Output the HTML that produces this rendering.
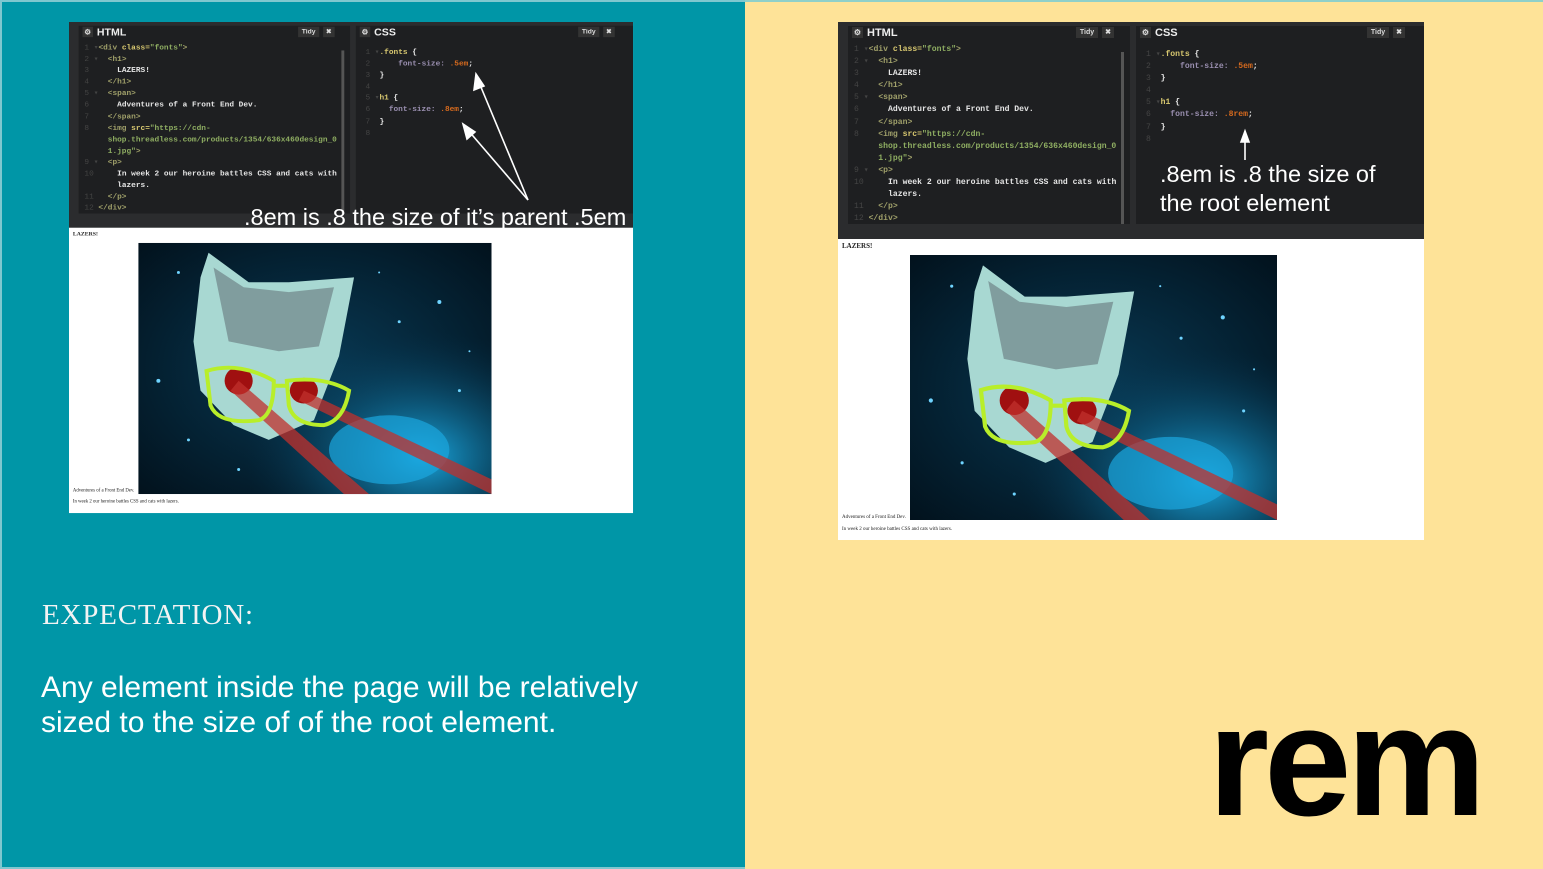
<!DOCTYPE html>
<html><head><meta charset="utf-8">
<style>
*{margin:0;padding:0;box-sizing:border-box}
body{width:1543px;height:869px;overflow:hidden;position:relative;font-family:"Liberation Sans",sans-serif}
#L{position:absolute;left:0;top:0;width:745px;height:869px;background:#0096a7;border:2px solid #7fc7cf;border-right:none}
#R{position:absolute;left:745px;top:0;width:798px;height:869px;background:#fee398;border-top:2px solid #8fd0c9}
.shot{position:absolute;width:586px;height:518px;transform-origin:0 0;background:#fff;overflow:hidden}
.dark{position:absolute;left:0;top:0;width:586px;height:217px;background:#2b2c2e}
.pane{position:absolute;top:4px;height:198px;background:#1e1f21}
.hd{position:absolute;top:5px;left:6px;color:#eee;font-weight:bold;font-size:11px}
.gear{display:inline-block;width:11px;height:11px;background:#333;color:#ddd;font-size:8px;text-align:center;line-height:11px;margin-right:4px;vertical-align:1px}
.btn{position:absolute;top:5px;height:11px;background:#333;color:#ddd;font-size:7px;line-height:11px;text-align:center;font-weight:bold}
.code{position:absolute;font-family:"Liberation Mono",monospace;font-size:8.1px;line-height:12.1px;white-space:pre;color:#ddd;font-weight:bold}
.ln{color:#444;font-weight:normal}
.t{color:#a0a06a}.a{color:#d8c870}.s{color:#8fae62}.w{color:#e6e6e6}
.p{color:#9a8fb0}.v{color:#d66a1e}
.prev{position:absolute;font-family:"Liberation Serif",serif;color:#222}
.img{position:absolute;left:72px;top:233px;width:367px;height:265px}
.ann{position:absolute;color:#fff;font-size:23.5px;white-space:nowrap}
</style></head><body>
<div id="L"></div><div id="R"></div>

<div class="shot" style="left:69px;top:22px;transform:scale(0.9625,0.948)">
 <div class="dark"></div>
 <div class="pane" style="left:10px;width:282px"></div>
 <div class="pane" style="left:298px;width:288px"></div>
 <div class="hd" style="left:14px"><span class="gear">⚙</span>HTML</div>
 <div class="btn" style="left:238px;width:22px">Tidy</div><div class="btn" style="left:264px;width:12px">✖</div>
 <div class="hd" style="left:302px"><span class="gear">⚙</span>CSS</div>
 <div class="btn" style="left:529px;width:22px">Tidy</div><div class="btn" style="left:555px;width:12px">✖</div>
 <div style="position:absolute;left:283px;top:30px;width:3px;height:172px;background:#555"></div>
 <div class="code" style="left:16px;top:22px"><span class="ln">1 ▾</span><span class="t">&lt;div </span><span class="a">class=</span><span class="s">"fonts"</span><span class="t">&gt;</span>
<span class="ln">2 ▾</span>  <span class="t">&lt;h1&gt;</span>
<span class="ln">3  </span>    <span class="w">LAZERS!</span>
<span class="ln">4  </span>  <span class="t">&lt;/h1&gt;</span>
<span class="ln">5 ▾</span>  <span class="t">&lt;span&gt;</span>
<span class="ln">6  </span>    <span class="w">Adventures of a Front End Dev.</span>
<span class="ln">7  </span>  <span class="t">&lt;/span&gt;</span>
<span class="ln">8  </span>  <span class="t">&lt;img </span><span class="a">src=</span><span class="s">"https://cdn-</span>
<span class="ln">   </span>  <span class="s">shop.threadless.com/products/1354/636x460design_0</span>
<span class="ln">   </span>  <span class="s">1.jpg"</span><span class="t">&gt;</span>
<span class="ln">9 ▾</span>  <span class="t">&lt;p&gt;</span>
<span class="ln">10 </span>    <span class="w">In week 2 our heroine battles CSS and cats with</span>
<span class="ln">   </span>    <span class="w">lazers.</span>
<span class="ln">11 </span>  <span class="t">&lt;/p&gt;</span>
<span class="ln">12 </span><span class="t">&lt;/div&gt;</span></div>
 <div class="code" style="left:308px;top:27px"><span class="ln">1 ▾</span><span class="a">.fonts </span><span class="w">{</span>
<span class="ln">2  </span>    <span class="p">font-size: </span><span class="v">.5em</span><span class="w">;</span>
<span class="ln">3  </span><span class="w">}</span>
<span class="ln">4  </span>
<span class="ln">5 ▾</span><span class="a">h1 </span><span class="w">{</span>
<span class="ln">6  </span>  <span class="p">font-size: </span><span class="v">.8em</span><span class="w">;</span>
<span class="ln">7  </span><span class="w">}</span>
<span class="ln">8  </span></div>
 <div class="prev" style="left:4px;top:221px;font-size:6px;font-weight:bold">LAZERS!</div>
 <svg class="img" viewBox="0 0 352 255" preserveAspectRatio="none">
  <defs><radialGradient id="neb" cx="0.8" cy="0.85" r="0.5"><stop offset="0" stop-color="#1aa8e0"/><stop offset="1" stop-color="#05304a" stop-opacity="0"/></radialGradient>
  <radialGradient id="bg" cx="0.5" cy="0.5" r="0.7"><stop offset="0" stop-color="#083a55"/><stop offset="1" stop-color="#02121d"/></radialGradient></defs>
  <rect width="352" height="255" fill="url(#bg)"/>
  <rect width="352" height="255" fill="url(#neb)"/>
  <ellipse cx="250" cy="210" rx="60" ry="35" fill="#1ba6de" opacity=".7"/>
  <g fill="#6fd4ff"><circle cx="40" cy="30" r="1.5"/><circle cx="300" cy="60" r="2"/><circle cx="260" cy="80" r="1.5"/><circle cx="20" cy="140" r="2"/><circle cx="320" cy="150" r="1.5"/><circle cx="50" cy="200" r="1.5"/><circle cx="240" cy="30" r="1"/><circle cx="330" cy="110" r="1"/><circle cx="100" cy="230" r="1.5"/></g>
  <path d="M62 35 L70 10 L110 40 L150 40 L215 35 L200 115 L175 180 L130 200 L95 185 L62 150 L55 100 Z" fill="#a8d8d2"/>
  <path d="M75 25 L105 45 L150 50 L195 45 L180 105 L140 110 L90 100 Z" fill="#6f8588" opacity=".7"/>
  <ellipse cx="100" cy="140" rx="14" ry="14" fill="#a01010"/>
  <ellipse cx="165" cy="150" rx="14" ry="13" fill="#a01010"/>
  <path d="M100 140 L230 255 L205 255 L92 150 Z" fill="#c0302c" opacity=".75"/>
  <path d="M165 150 L352 240 L352 255 L160 160 Z" fill="#c0302c" opacity=".75"/>
  <path d="M68 130 Q100 120 135 140 Q135 175 120 180 Q80 185 72 165 Z M148 140 Q185 135 210 150 Q205 180 185 185 Q155 185 150 165 Z M135 145 L148 145" fill="none" stroke="#b8ee2a" stroke-width="4"/>
 </svg>
 <div class="prev" style="left:4px;top:492px;font-size:5px">Adventures of a Front End Dev.</div>
 <div class="prev" style="left:4px;top:504px;font-size:5px">In week 2 our heroine battles CSS and cats with lazers.</div>
</div>

<div class="shot" style="left:838px;top:22px">
 <div class="dark"></div>
 <div class="pane" style="left:10px;width:282px"></div>
 <div class="pane" style="left:298px;width:288px"></div>
 <div class="hd" style="left:14px"><span class="gear">⚙</span>HTML</div>
 <div class="btn" style="left:238px;width:22px">Tidy</div><div class="btn" style="left:264px;width:12px">✖</div>
 <div class="hd" style="left:302px"><span class="gear">⚙</span>CSS</div>
 <div class="btn" style="left:529px;width:22px">Tidy</div><div class="btn" style="left:555px;width:12px">✖</div>
 <div style="position:absolute;left:283px;top:30px;width:3px;height:172px;background:#555"></div>
 <div class="code" style="left:16px;top:22px"><span class="ln">1 ▾</span><span class="t">&lt;div </span><span class="a">class=</span><span class="s">"fonts"</span><span class="t">&gt;</span>
<span class="ln">2 ▾</span>  <span class="t">&lt;h1&gt;</span>
<span class="ln">3  </span>    <span class="w">LAZERS!</span>
<span class="ln">4  </span>  <span class="t">&lt;/h1&gt;</span>
<span class="ln">5 ▾</span>  <span class="t">&lt;span&gt;</span>
<span class="ln">6  </span>    <span class="w">Adventures of a Front End Dev.</span>
<span class="ln">7  </span>  <span class="t">&lt;/span&gt;</span>
<span class="ln">8  </span>  <span class="t">&lt;img </span><span class="a">src=</span><span class="s">"https://cdn-</span>
<span class="ln">   </span>  <span class="s">shop.threadless.com/products/1354/636x460design_0</span>
<span class="ln">   </span>  <span class="s">1.jpg"</span><span class="t">&gt;</span>
<span class="ln">9 ▾</span>  <span class="t">&lt;p&gt;</span>
<span class="ln">10 </span>    <span class="w">In week 2 our heroine battles CSS and cats with</span>
<span class="ln">   </span>    <span class="w">lazers.</span>
<span class="ln">11 </span>  <span class="t">&lt;/p&gt;</span>
<span class="ln">12 </span><span class="t">&lt;/div&gt;</span></div>
 <div class="code" style="left:308px;top:27px"><span class="ln">1 ▾</span><span class="a">.fonts </span><span class="w">{</span>
<span class="ln">2  </span>    <span class="p">font-size: </span><span class="v">.5em</span><span class="w">;</span>
<span class="ln">3  </span><span class="w">}</span>
<span class="ln">4  </span>
<span class="ln">5 ▾</span><span class="a">h1 </span><span class="w">{</span>
<span class="ln">6  </span>  <span class="p">font-size: </span><span class="v">.8rem</span><span class="w">;</span>
<span class="ln">7  </span><span class="w">}</span>
<span class="ln">8  </span></div>
 <div class="prev" style="left:4px;top:220px;font-size:7px;font-weight:bold">LAZERS!</div>
 <svg class="img" viewBox="0 0 352 255" preserveAspectRatio="none">
  <rect width="352" height="255" fill="url(#bg)"/>
  <rect width="352" height="255" fill="url(#neb)"/>
  <ellipse cx="250" cy="210" rx="60" ry="35" fill="#1ba6de" opacity=".7"/>
  <g fill="#6fd4ff"><circle cx="40" cy="30" r="1.5"/><circle cx="300" cy="60" r="2"/><circle cx="260" cy="80" r="1.5"/><circle cx="20" cy="140" r="2"/><circle cx="320" cy="150" r="1.5"/><circle cx="50" cy="200" r="1.5"/><circle cx="240" cy="30" r="1"/><circle cx="330" cy="110" r="1"/><circle cx="100" cy="230" r="1.5"/></g>
  <path d="M62 35 L70 10 L110 40 L150 40 L215 35 L200 115 L175 180 L130 200 L95 185 L62 150 L55 100 Z" fill="#a8d8d2"/>
  <path d="M75 25 L105 45 L150 50 L195 45 L180 105 L140 110 L90 100 Z" fill="#6f8588" opacity=".7"/>
  <ellipse cx="100" cy="140" rx="14" ry="14" fill="#a01010"/>
  <ellipse cx="165" cy="150" rx="14" ry="13" fill="#a01010"/>
  <path d="M100 140 L230 255 L205 255 L92 150 Z" fill="#c0302c" opacity=".75"/>
  <path d="M165 150 L352 240 L352 255 L160 160 Z" fill="#c0302c" opacity=".75"/>
  <path d="M68 130 Q100 120 135 140 Q135 175 120 180 Q80 185 72 165 Z M148 140 Q185 135 210 150 Q205 180 185 185 Q155 185 150 165 Z M135 145 L148 145" fill="none" stroke="#b8ee2a" stroke-width="4"/>
 </svg>
 <div class="prev" style="left:4px;top:493px;font-size:5px">Adventures of a Front End Dev.</div>
 <div class="prev" style="left:4px;top:505px;font-size:5px">In week 2 our heroine battles CSS and cats with lazers.</div>
</div>

<svg style="position:absolute;left:0;top:0" width="1543" height="300">
 <g stroke="#fff" stroke-width="1.6" fill="#fff">
  <line x1="528" y1="200" x2="478" y2="80"/><polygon points="476,74 474,90 484,86"/>
  <line x1="528" y1="200" x2="467" y2="129"/><polygon points="463,124 467,139 475,132"/>
  <line x1="1245" y1="160" x2="1245" y2="136"/><polygon points="1245,131 1241,142 1249,142"/>
 </g>
</svg>
<div class="ann" style="left:244px;top:204px">.8em is .8 the size of it’s parent .5em</div>
<div class="ann" style="left:1160px;top:160px;line-height:29px">.8em is .8 the size of<br>the root element</div>

<div style="position:absolute;left:42px;top:599px;color:#f3f3f3;font-family:'Liberation Serif',serif;font-size:29px;letter-spacing:0.8px">EXPECTATION:</div>
<div style="position:absolute;left:41px;top:670px;color:#fff;font-size:30px;line-height:35px">Any element inside the page will be relatively<br>sized to the size of of the root element.</div>
<div style="position:absolute;left:1208px;top:672px;font-size:157px;font-weight:bold;letter-spacing:-5px;color:#000;line-height:180px">rem</div>
</body></html>
